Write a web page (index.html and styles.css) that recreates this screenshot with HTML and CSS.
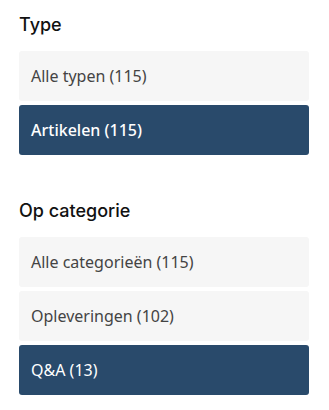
FILE: index.html
```html
<!DOCTYPE html>
<html lang="nl">
<head>
  <meta charset="UTF-8" />
  <meta name="viewport" content="width=device-width, initial-scale=1" />
  <title>Filters</title>
  <link rel="stylesheet" href="styles.css">
</head>
<body>

  <div class="filters">

    <!-- Type -->
    <div class="filter-group">
      <h3>Type</h3>
      <ul class="filter-list">
        <li><a href="#">Alle typen (115)</a></li>
        <li><a href="#" class="active bold">Artikelen (115)</a></li>
      </ul>
    </div>

    <!-- Op categorie -->
    <div class="filter-group">
      <h3>Op categorie</h3>
      <ul class="filter-list">
        <li><a href="#">Alle categorieën (115)</a></li>
        <li><a href="#">Opleveringen (102)</a></li>
        <li><a href="#" class="active">Q&amp;A (13)</a></li>
      </ul>
    </div>

  </div>

</body>
</html>
```

FILE: styles.css
```css
/* Reset */
* {
  margin: 0;
  padding: 0;
  box-sizing: border-box;
}
body {
  font-family: "Noto Sans", "Open Sans", sans-serif;
  background: #fff;
  color: #333;
}

.filters {
  padding: 14px 20px 0 19px;
}

.filter-group {
  margin-bottom: 45px;
}
.filter-group:last-child {
  margin-bottom: 0;
}

h3 {
  font-family: Inter, "Noto Sans", sans-serif;
  font-size: 18px;
  font-weight: 500;
  color: #111;
  line-height: 22px;
  margin-bottom: 15px;
}

/* Lijst met filters */
.filter-list {
  list-style: none;
  display: flex;
  flex-direction: column;
  gap: 4px;
}
.filter-list a {
  display: flex;
  align-items: center;
  height: 50px;
  padding: 0 12px;
  background: #f6f6f6;
  border-radius: 3px;
  color: #444;
  font-size: 16px;
  text-decoration: none;
}
.filter-list a.active {
  background: #294a6b;
  color: #fff;
}
.filter-list a.bold {
  font-weight: 500;
}
```
